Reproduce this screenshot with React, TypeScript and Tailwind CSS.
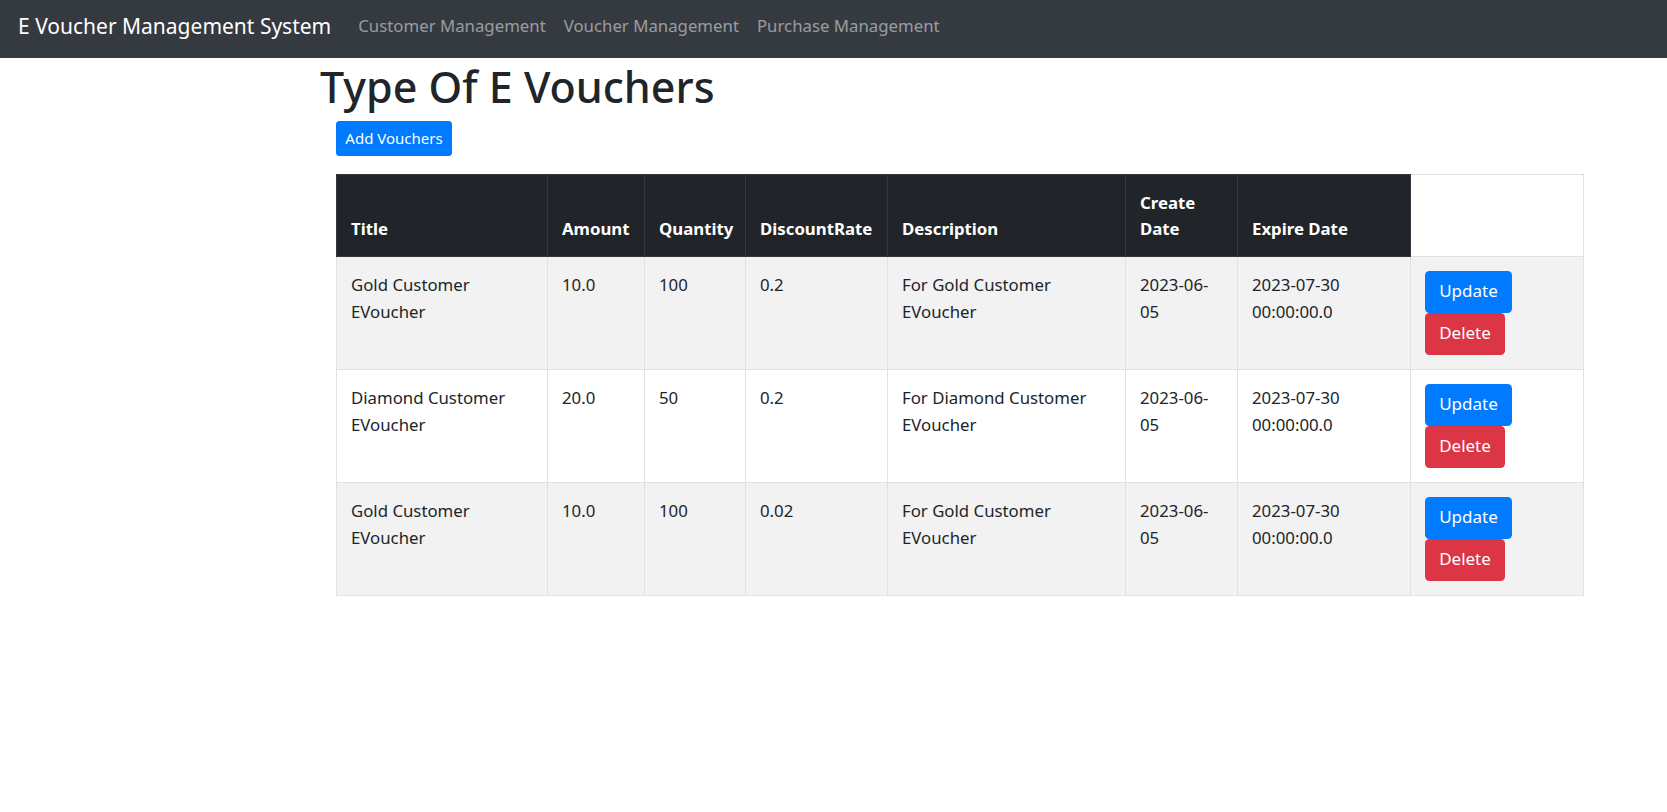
const vouchers = [
  { title: "Gold Customer EVoucher", amount: "10.0", qty: "100", rate: "0.2", desc: "For Gold Customer EVoucher", created: "2023-06-05", expire: "2023-07-30 00:00:00.0" },
  { title: "Diamond Customer EVoucher", amount: "20.0", qty: "50", rate: "0.2", desc: "For Diamond Customer EVoucher", created: "2023-06-05", expire: "2023-07-30 00:00:00.0" },
  { title: "Gold Customer EVoucher", amount: "10.0", qty: "100", rate: "0.02", desc: "For Gold Customer EVoucher", created: "2023-06-05", expire: "2023-07-30 00:00:00.0" },
];

function Navbar() {
  return (
    <nav className="h-[58px] bg-[#343a40] flex items-center px-[18px] pb-[5px]">
      <span className="text-white text-[21px] mr-[18px]">E Voucher Management System</span>
      <a className="text-white/50 text-[16.8px] px-[9px]" href="#">Customer Management</a>
      <a className="text-white/50 text-[16.8px] px-[9px]" href="#">Voucher Management</a>
      <a className="text-white/50 text-[16.8px] px-[9px]" href="#">Purchase Management</a>
    </nav>
  );
}

export default function App() {
  const th = "px-[14px] py-[13px] align-bottom text-left font-bold border border-[#32383e]";
  const td = "px-[14px] pt-[14px] pb-[13px] align-top leading-[27px] border border-[#dee2e6]";
  return (
    <div className="min-h-screen bg-white text-[#212529] font-['Noto_Sans',sans-serif] text-[16.8px] leading-[26.4px]">
      <Navbar />
      <div className="pl-[320px] pr-[84px]">
        <h1 className="text-[43px] font-medium leading-[1.2] mt-[3px] mb-[8px]">Type Of E Vouchers</h1>
        <div className="pl-[16px]">
          <button className="h-[35px] w-[116px] bg-[#007bff] text-white text-[15px] rounded-[3.5px]">Add Vouchers</button>
          <table className="mt-[18px] w-[1247px] table-fixed border-collapse">
            <colgroup>
              <col className="w-[211px]" />
              <col className="w-[97px]" />
              <col className="w-[101px]" />
              <col className="w-[142px]" />
              <col className="w-[238px]" />
              <col className="w-[112px]" />
              <col className="w-[173px]" />
              <col className="w-[173px]" />
            </colgroup>
            <thead>
              <tr className="h-[82px] text-white">
                <th className={`${th} bg-[#212529]`}>Title</th>
                <th className={`${th} bg-[#212529]`}>Amount</th>
                <th className={`${th} bg-[#212529]`}>Quantity</th>
                <th className={`${th} bg-[#212529]`}>DiscountRate</th>
                <th className={`${th} bg-[#212529]`}>Description</th>
                <th className={`${th} bg-[#212529]`}>Create Date</th>
                <th className={`${th} bg-[#212529]`}>Expire Date</th>
                <th className="border border-[#dee2e6] bg-white"></th>
              </tr>
            </thead>
            <tbody>
              {vouchers.map((v, i) => (
                <tr key={i} className={i % 2 === 0 ? "bg-[#f2f2f2]" : "bg-white"}>
                  <td className={td}>{v.title}</td>
                  <td className={td}>{v.amount}</td>
                  <td className={td}>{v.qty}</td>
                  <td className={td}>{v.rate}</td>
                  <td className={td}>{v.desc}</td>
                  <td className={td}>{v.created}</td>
                  <td className={td}>{v.expire}</td>
                  <td className="px-[14px] pt-[14px] pb-[14px] align-top border border-[#dee2e6]">
                    <button className="block h-[42px] w-[87px] bg-[#007bff] text-white text-[17px] rounded-[4.4px]">Update</button>
                    <button className="block h-[42px] w-[80px] bg-[#dc3545] text-white text-[17px] rounded-[4.4px]">Delete</button>
                  </td>
                </tr>
              ))}
            </tbody>
          </table>
        </div>
      </div>
    </div>
  );
}
